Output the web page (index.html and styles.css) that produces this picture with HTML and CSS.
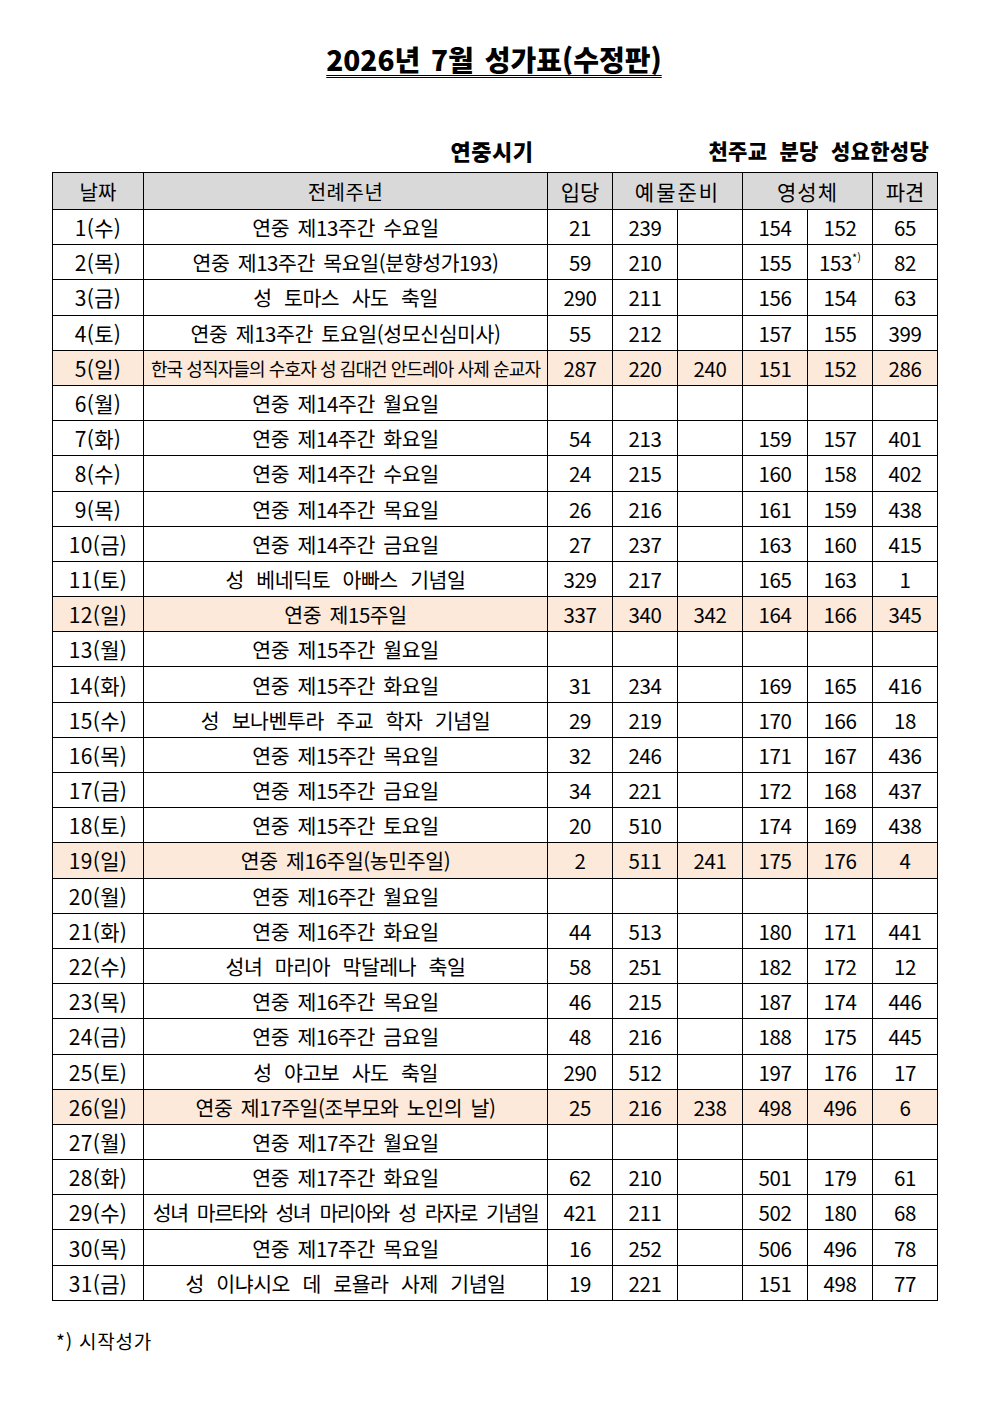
FILE: index.html
```html
<!DOCTYPE html>
<html lang="ko">
<head>
<meta charset="utf-8">
<title>2026년 7월 성가표(수정판)</title>
<link rel="stylesheet" href="styles.css">
</head>
<body>
<div class="page">
  <h1 class="title">2026년 7월 성가표(수정판)</h1>
  <div class="subline">
    <span class="season">연중시기</span>
    <span class="parish">천주교 분당 성요한성당</span>
  </div>
  <table class="hymns">
    <colgroup>
      <col class="c-date"><col class="c-lit"><col class="c-n"><col class="c-n"><col class="c-n"><col class="c-n"><col class="c-n"><col class="c-n">
    </colgroup>
    <thead>
      <tr><th>날짜</th><th class="lit">전례주년</th><th class="big">입당</th><th colspan="2" class="big wide">예물준비</th><th colspan="2" class="big mid">영성체</th><th class="big">파견</th></tr>
    </thead>
    <tbody>
      <tr><td>1(수)</td><td>연중 제13주간 수요일</td><td>21</td><td>239</td><td></td><td>154</td><td>152</td><td>65</td></tr>
      <tr><td>2(목)</td><td>연중 제13주간 목요일(분향성가193)</td><td>59</td><td>210</td><td></td><td>155</td><td>153<sup>*)</sup></td><td>82</td></tr>
      <tr><td>3(금)</td><td class="spaced">성 토마스 사도 축일</td><td>290</td><td>211</td><td></td><td>156</td><td>154</td><td>63</td></tr>
      <tr><td>4(토)</td><td>연중 제13주간 토요일(성모신심미사)</td><td>55</td><td>212</td><td></td><td>157</td><td>155</td><td>399</td></tr>
      <tr class="sun"><td>5(일)</td><td class="tight">한국 성직자들의 수호자 성 김대건 안드레아 사제 순교자</td><td>287</td><td>220</td><td>240</td><td>151</td><td>152</td><td>286</td></tr>
      <tr><td>6(월)</td><td>연중 제14주간 월요일</td><td></td><td></td><td></td><td></td><td></td><td></td></tr>
      <tr><td>7(화)</td><td>연중 제14주간 화요일</td><td>54</td><td>213</td><td></td><td>159</td><td>157</td><td>401</td></tr>
      <tr><td>8(수)</td><td>연중 제14주간 수요일</td><td>24</td><td>215</td><td></td><td>160</td><td>158</td><td>402</td></tr>
      <tr><td>9(목)</td><td>연중 제14주간 목요일</td><td>26</td><td>216</td><td></td><td>161</td><td>159</td><td>438</td></tr>
      <tr><td>10(금)</td><td>연중 제14주간 금요일</td><td>27</td><td>237</td><td></td><td>163</td><td>160</td><td>415</td></tr>
      <tr><td>11(토)</td><td class="spaced">성 베네딕토 아빠스 기념일</td><td>329</td><td>217</td><td></td><td>165</td><td>163</td><td>1</td></tr>
      <tr class="sun"><td>12(일)</td><td>연중 제15주일</td><td>337</td><td>340</td><td>342</td><td>164</td><td>166</td><td>345</td></tr>
      <tr><td>13(월)</td><td>연중 제15주간 월요일</td><td></td><td></td><td></td><td></td><td></td><td></td></tr>
      <tr><td>14(화)</td><td>연중 제15주간 화요일</td><td>31</td><td>234</td><td></td><td>169</td><td>165</td><td>416</td></tr>
      <tr><td>15(수)</td><td class="spaced">성 보나벤투라 주교 학자 기념일</td><td>29</td><td>219</td><td></td><td>170</td><td>166</td><td>18</td></tr>
      <tr><td>16(목)</td><td>연중 제15주간 목요일</td><td>32</td><td>246</td><td></td><td>171</td><td>167</td><td>436</td></tr>
      <tr><td>17(금)</td><td>연중 제15주간 금요일</td><td>34</td><td>221</td><td></td><td>172</td><td>168</td><td>437</td></tr>
      <tr><td>18(토)</td><td>연중 제15주간 토요일</td><td>20</td><td>510</td><td></td><td>174</td><td>169</td><td>438</td></tr>
      <tr class="sun"><td>19(일)</td><td>연중 제16주일(농민주일)</td><td>2</td><td>511</td><td>241</td><td>175</td><td>176</td><td>4</td></tr>
      <tr><td>20(월)</td><td>연중 제16주간 월요일</td><td></td><td></td><td></td><td></td><td></td><td></td></tr>
      <tr><td>21(화)</td><td>연중 제16주간 화요일</td><td>44</td><td>513</td><td></td><td>180</td><td>171</td><td>441</td></tr>
      <tr><td>22(수)</td><td class="spaced">성녀 마리아 막달레나 축일</td><td>58</td><td>251</td><td></td><td>182</td><td>172</td><td>12</td></tr>
      <tr><td>23(목)</td><td>연중 제16주간 목요일</td><td>46</td><td>215</td><td></td><td>187</td><td>174</td><td>446</td></tr>
      <tr><td>24(금)</td><td>연중 제16주간 금요일</td><td>48</td><td>216</td><td></td><td>188</td><td>175</td><td>445</td></tr>
      <tr><td>25(토)</td><td class="spaced">성 야고보 사도 축일</td><td>290</td><td>512</td><td></td><td>197</td><td>176</td><td>17</td></tr>
      <tr class="sun"><td>26(일)</td><td>연중 제17주일(조부모와 노인의 날)</td><td>25</td><td>216</td><td>238</td><td>498</td><td>496</td><td>6</td></tr>
      <tr><td>27(월)</td><td>연중 제17주간 월요일</td><td></td><td></td><td></td><td></td><td></td><td></td></tr>
      <tr><td>28(화)</td><td>연중 제17주간 화요일</td><td>62</td><td>210</td><td></td><td>501</td><td>179</td><td>61</td></tr>
      <tr><td>29(수)</td><td class="long">성녀 마르타와 성녀 마리아와 성 라자로 기념일</td><td>421</td><td>211</td><td></td><td>502</td><td>180</td><td>68</td></tr>
      <tr><td>30(목)</td><td>연중 제17주간 목요일</td><td>16</td><td>252</td><td></td><td>506</td><td>496</td><td>78</td></tr>
      <tr><td>31(금)</td><td class="spaced">성 이냐시오 데 로욜라 사제 기념일</td><td>19</td><td>221</td><td></td><td>151</td><td>498</td><td>77</td></tr>
    </tbody>
  </table>
  <p class="note">*) 시작성가</p>
</div>
</body>
</html>
```

FILE: styles.css
```css
html, body {
  margin: 0;
  padding: 0;
  background: #ffffff;
}

body {
  font-family: "Noto Sans CJK KR", "Noto Sans", sans-serif;
  color: #000000;
}

.page {
  width: 884px;
  margin: 0 0 0 52px;
  padding-top: 42px;
}

.title {
  margin: 0;
  text-align: center;
  font-size: 28px;
  line-height: 34px;
  font-weight: 900;
  letter-spacing: 0;
  word-spacing: 3px;
  text-decoration: underline double;
  text-decoration-thickness: 1px;
  text-underline-offset: 4px;
}

.subline {
  position: relative;
  margin-top: 60px;
  height: 28px;
  margin-bottom: 8px;
  display: flex;
  justify-content: center;
  align-items: center;
  font-size: 22px;
  font-weight: 900;
  line-height: 28px;
}

.season {
  letter-spacing: 0.5px;
  margin-left: -4px;
}

.parish {
  position: absolute;
  right: 7px;
  top: 0;
  font-size: 21px;
  letter-spacing: 0.3px;
  word-spacing: 6px;
}

.hymns {
  width: 883px;
  border-collapse: collapse;
  table-layout: fixed;
}

.c-date { width: 91px; }
.c-lit { width: 404px; }
.c-n { width: 65px; }

.hymns th,
.hymns td {
  border: 1px solid #000000;
  padding: 0;
  text-align: center;
  white-space: nowrap;
  overflow: hidden;
}

.hymns th {
  background: #d9d9d9;
  height: 36px;
  font-size: 20px;
  font-weight: 400;
}

.hymns th.lit {
  letter-spacing: 0.5px;
}

.hymns th.big {
  font-size: 21px;
}

.hymns th.wide {
  letter-spacing: 2px;
}

.hymns th.mid {
  letter-spacing: 1px;
}

.hymns td {
  height: 34.2px;
  font-size: 20.5px;
  line-height: 24px;
  letter-spacing: -0.4px;
  word-spacing: 3px;
}

.hymns td:first-child {
  font-size: 21px;
  letter-spacing: 0.3px;
}

.hymns td.spaced {
  word-spacing: 7px;
}

.hymns td.tight {
  font-size: 18px;
  letter-spacing: -0.9px;
  word-spacing: 0;
}

.hymns td.long {
  letter-spacing: -1.5px;
  word-spacing: 5px;
}

.hymns tr.sun td {
  background: #fde9d9;
}

.hymns sup {
  font-size: 11px;
  line-height: 0;
  vertical-align: 9px;
  letter-spacing: 0;
}

.note {
  margin: 28px 0 0 4px;
  font-size: 19px;
  line-height: 24px;
  letter-spacing: 0.8px;
}
```
